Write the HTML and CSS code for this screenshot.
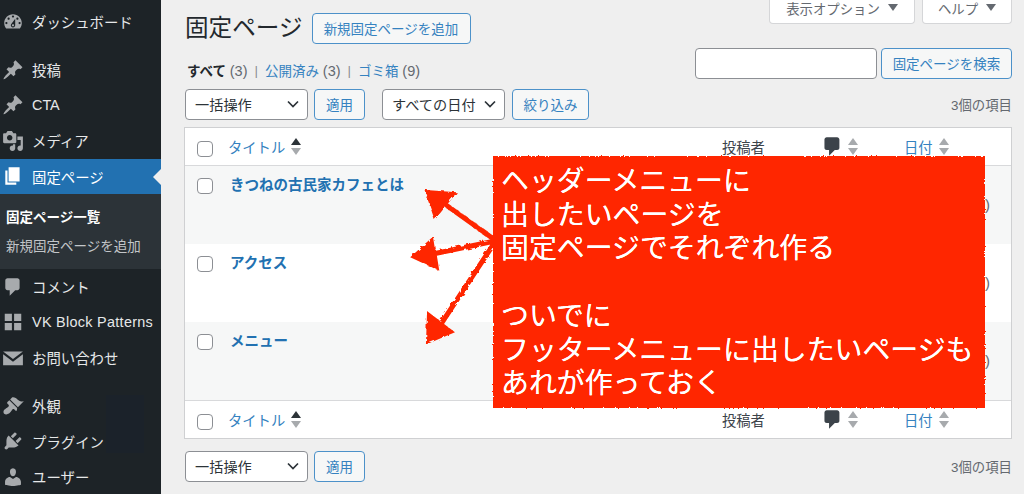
FILE: index.html
```html
<!DOCTYPE html>
<html lang="ja">
<head>
<meta charset="utf-8">
<title>固定ページ</title>
<link rel="stylesheet" href="styles.css">
</head>
<body>
<svg class="defs" width="0" height="0" aria-hidden="true">
  <defs>
    <filter id="rough" x="-5%" y="-5%" width="110%" height="110%">
      <feTurbulence type="fractalNoise" baseFrequency="0.22" numOctaves="2" seed="4" result="n"/>
      <feDisplacementMap in="SourceGraphic" in2="n" scale="4"/>
    </filter>
    <filter id="rough-edge" x="-2%" y="-2%" width="104%" height="104%">
      <feTurbulence type="fractalNoise" baseFrequency="0.6" numOctaves="2" seed="7" result="n"/>
      <feDisplacementMap in="SourceGraphic" in2="n" scale="2.500"/>
    </filter>
    <symbol id="i-pin" viewBox="0 0 20 20"><path d="M10.44 3.02l1.82-1.82 6.36 6.35-1.83 1.82c-1.05-.68-2.48-.57-3.41.36l-.75.75c-.92.93-1.04 2.35-.35 3.41l-1.83 1.82-2.41-2.41-2.8 2.79c-.42.42-3.38 2.71-3.8 2.29s1.86-3.39 2.28-3.81l2.79-2.79L4.1 9.36l1.83-1.82c1.05.69 2.48.57 3.4-.36l.75-.75c.93-.92 1.05-2.35.36-3.41z"/></symbol>
    <symbol id="i-comment" viewBox="0 0 20 20"><path d="M5 2h9c1.1 0 2 .9 2 2v7c0 1.1-.9 2-2 2h-2l-5 5v-5H5c-1.1 0-2-.9-2-2V4c0-1.1.9-2 2-2z"/></symbol>
    <symbol id="i-sort" viewBox="0 0 10 17"><path class="up" d="M5 0l5 7H0z"/><path class="down" d="M0 10h10l-5 7z"/></symbol>
    <symbol id="i-chev" viewBox="0 0 12 8"><path d="M1 1.500l5 5 5-5" fill="none" stroke="currentColor" stroke-width="1.700"/></symbol>
  </defs>
</svg>
<div class="app">
  <nav class="sidebar">
    <a class="item"><svg class="ico" viewBox="0 0 20 20"><path d="M3.76 16h12.48c1.1-1.37 1.76-3.11 1.76-5 0-4.42-3.58-8-8-8s-8 3.58-8 8c0 1.89.66 3.63 1.76 5zM10 4c.55 0 1 .45 1 1s-.45 1-1 1-1-.45-1-1 .45-1 1-1zM6 6c.55 0 1 .45 1 1s-.45 1-1 1-1-.45-1-1 .45-1 1-1zm8 0c.55 0 1 .45 1 1s-.45 1-1 1-1-.45-1-1 .45-1 1-1zm-5.37 5.55L12 7v6c0 1.1-.9 2-2 2s-2-.9-2-2c0-.57.24-1.08.63-1.45zM4 10c.55 0 1 .45 1 1s-.45 1-1 1-1-.45-1-1 .45-1 1-1zm12 0c.55 0 1 .45 1 1s-.45 1-1 1-1-.45-1-1 .45-1 1-1zm-5 3c0-.55-.45-1-1-1s-1 .45-1 1 .45 1 1 1 1-.45 1-1z" fill-rule="evenodd"/></svg>ダッシュボード</a>
    <div class="group">
      <a class="item"><svg class="ico"><use href="#i-pin"/></svg>投稿</a>
      <a class="item"><svg class="ico"><use href="#i-pin"/></svg>CTA</a>
      <a class="item"><svg class="ico" viewBox="0 0 20 20"><path d="M13 11V4c0-.55-.45-1-1-1h-1.67L9 1H5L3.67 3H2c-.55 0-1 .45-1 1v7c0 .55.45 1 1 1h10c.55 0 1-.45 1-1zM7 4.5c1.38 0 2.5 1.12 2.5 2.5S8.38 9.5 7 9.5 4.5 8.38 4.5 7 5.62 4.5 7 4.5zM14 6h5v10.5c0 1.38-1.12 2.5-2.5 2.5S14 17.88 14 16.5s1.12-2.5 2.5-2.5c.17 0 .34.02.5.05V9h-3V6zm-4 8.05V13h2v3.5c0 1.38-1.12 2.5-2.5 2.5S7 17.88 7 16.5 8.12 14 9.5 14c.17 0 .34.02.5.05z"/></svg>メディア</a>
      <a class="item current"><svg class="ico" viewBox="0 0 20 20"><path d="M6 15V2h10v13H6zm-1 1h8v2H3V5h2v11z"/></svg>固定ページ</a>
      <div class="submenu">
        <a class="sub strong">固定ページ一覧</a>
        <a class="sub">新規固定ページを追加</a>
      </div>
      <a class="item"><svg class="ico"><use href="#i-comment"/></svg>コメント</a>
      <a class="item wide"><svg class="ico" viewBox="0 0 20 20"><path d="M2.500 2.500h6.500v6.500H2.500zM11 2.500h6.500v6.500H11zM2.500 11h6.500v6.500H2.500zM11 11h6.500v6.500H11z"/></svg>VK Block Patterns</a>
      <a class="item"><svg class="ico" viewBox="0 0 20 20"><path d="M1 4h18L10 11zM1 6.500l9 7 9-7V16.500H1z"/></svg>お問い合わせ</a>
    </div>
    <div class="group">
      <a class="item"><svg class="ico" viewBox="0 0 20 20"><path d="M14.48 11.06L7.41 3.99l1.5-1.5c.5-.56 2.3-.47 3.51.32 1.21.8 1.43 1.28 2.91 2.1 1.18.64 2.45 1.26 4.45.85zm-.71.71L6.7 4.7 4.93 6.47c-.39.39-.39 1.02 0 1.41l1.06 1.06c.39.39.39 1.03 0 1.42-.6.6-1.43 1.11-2.21 1.69-.35.26-.7.53-1.01.84C1.43 13.23.78 15.79 2 17s3.77.56 5.11-.77c.31-.31.58-.66.84-1.01.58-.78 1.09-1.61 1.69-2.21.39-.39 1.03-.39 1.42 0l1.06 1.06c.39.39 1.02.39 1.41 0z"/></svg>外観</a>
      <a class="item"><svg class="ico" viewBox="0 0 20 20"><path d="M13.11 4.36L9.87 7.6 8 5.73l3.24-3.24c.35-.34 1.05-.2 1.56.32.52.51.66 1.21.31 1.55zm-8 1.77l.91-1.12 9.01 9.01-1.19.84c-.71.71-2.63 1.16-3.82 1.16H6.14L4.9 17.26c-.59.59-1.54.59-2.12 0-.59-.58-.59-1.53 0-2.12l1.24-1.24v-3.88c0-1.13.4-3.19 1.09-3.89zm7.26 3.97l3.24-3.24c.34-.35 1.04-.21 1.55.31.52.51.66 1.21.31 1.55l-3.24 3.25z"/></svg>プラグイン</a>
      <a class="item"><svg class="ico" viewBox="0 0 20 20"><path d="M10 9.25c-2.27 0-2.73-3.44-2.73-3.44C7 4.02 7.82 2 9.97 2c2.16 0 2.98 2.02 2.71 3.81 0 0-.41 3.44-2.68 3.44zm0 2.57L12.72 10c2.39 0 4.52 2.33 4.52 4.53v2.49s-3.65 1.13-7.24 1.13c-3.65 0-7.24-1.13-7.24-1.13v-2.49c0-2.25 1.94-4.48 4.47-4.48z"/></svg>ユーザー</a>
    </div>
    <span class="smudge"></span>
  </nav>

  <main class="main">
    <div class="top">
      <div class="heading">
        <h1>固定ページ</h1>
        <a class="btn add">新規固定ページを追加</a>
      </div>
      <div class="tabs">
        <a class="tab screen">表示オプション<i class="tri"></i></a>
        <a class="tab help">ヘルプ<i class="tri"></i></a>
      </div>
    </div>

    <div class="filters">
      <ul class="subsub">
        <li><b>すべて</b> <span>(3)</span></li>
        <li class="sep">|</li>
        <li><a>公開済み</a> <span>(3)</span></li>
        <li class="sep">|</li>
        <li><a>ゴミ箱</a> <span>(9)</span></li>
      </ul>
      <div class="search">
        <input class="search-input" type="text" aria-label="固定ページを検索">
        <a class="btn search-btn">固定ページを検索</a>
      </div>
    </div>

    <div class="toolbar">
      <div class="select bulk">一括操作<svg class="chev"><use href="#i-chev"/></svg></div>
      <a class="btn apply">適用</a>
      <div class="select dates">すべての日付<svg class="chev"><use href="#i-chev"/></svg></div>
      <a class="btn narrow">絞り込み</a>
      <span class="count">3個の項目</span>
    </div>

    <section class="table">
      <div class="row head">
        <span class="check"></span>
        <span class="col-title"><a>タイトル</a><svg class="sort active"><use href="#i-sort"/></svg></span>
        <span class="col-author">投稿者</span>
        <span class="col-comments"><svg class="cmt"><use href="#i-comment"/></svg><svg class="sort"><use href="#i-sort"/></svg></span>
        <span class="col-date"><a>日付</a><svg class="sort"><use href="#i-sort"/></svg></span>
      </div>
      <div class="row page odd">
        <span class="check"></span>
        <a class="page-title">きつねの古民家カフェとは</a>
        <span class="date-tail">)</span>
      </div>
      <div class="row page">
        <span class="check"></span>
        <a class="page-title">アクセス</a>
        <span class="date-tail">)</span>
      </div>
      <div class="row page odd">
        <span class="check"></span>
        <a class="page-title">メニュー</a>
        <span class="date-tail">)</span>
      </div>
      <div class="row head foot">
        <span class="check"></span>
        <span class="col-title"><a>タイトル</a><svg class="sort active"><use href="#i-sort"/></svg></span>
        <span class="col-author">投稿者</span>
        <span class="col-comments"><svg class="cmt"><use href="#i-comment"/></svg><svg class="sort"><use href="#i-sort"/></svg></span>
        <span class="col-date"><a>日付</a><svg class="sort"><use href="#i-sort"/></svg></span>
      </div>
    </section>

    <div class="toolbar bottom">
      <div class="select bulk">一括操作<svg class="chev"><use href="#i-chev"/></svg></div>
      <a class="btn apply">適用</a>
      <span class="count">3個の項目</span>
    </div>
  </main>
</div>

<svg class="arrows" viewBox="0 0 90 170" aria-hidden="true">
  <g class="rough-art">
    <path class="shaft" d="M85 65 29 25M85 66 18 80M85 67 29 152"/>
    <path class="head-tri" d="M16 16 45 18 25 43zM2 82 23 63 28 94zM18 138 43 157 17 168z"/>
  </g>
</svg>

<aside class="callout">
  <span class="callout-bg"></span>
  <p>ヘッダーメニューに<br>出したいページを<br>固定ページでそれぞれ作る<br><br>ついでに<br>フッターメニューに出したいページも<br>あれが作っておく</p>
</aside>
</body>
</html>
```

FILE: styles.css
```css
* { box-sizing: border-box; }
html, body { margin: 0; height: 494px; overflow: hidden; }
body {
  position: relative;
  background: #efefef;
  color: #3c434a;
  font-family: "Liberation Sans", "Noto Sans CJK JP", sans-serif;
  font-size: 14px;
}
a { color: #3582c0; text-decoration: none; }
.defs { position: absolute; }

.app { display: flex; height: 494px; }

/* sidebar */
.sidebar {
  position: relative;
  flex: 0 0 161px;
  background: #1d2327;
  padding-top: 4px;
  color: #f0f0f1;
}
.group { margin-top: 12.500px; }
.item {
  position: relative;
  z-index: 1;
  display: flex;
  align-items: center;
  gap: 8px;
  height: 35.500px;
  padding-left: 2px;
  color: #e6e8e9;
  font-size: 14.400px;
  white-space: nowrap;
}
.wide { letter-spacing: .3px; }
.ico { width: 22px; height: 22px; flex: none; fill: #a7aaad; }
.item.current { background: #2271b1; color: #fff; }
.item.current .ico { fill: #fff; }
.item.current::after {
  content: "";
  position: absolute;
  right: 0;
  top: 10px;
  border: 8px solid transparent;
  border-right-color: #efefef;
  border-left-width: 0;
}
.submenu { background: #2c3338; height: 75px; padding-top: 14px; }
.sub { display: block; padding-left: 6px; height: 29px; line-height: 20px; font-size: 13.500px; color: #c3c6c9; white-space: nowrap; }
.sub.strong { color: #fff; font-weight: 700; }
.smudge { position: absolute; left: 106px; top: 395px; width: 38px; height: 58px; background: #1b222a; }

/* main */
.main { flex: 1; min-width: 0; padding: 0 12px 0 24px; }
.top { display: flex; justify-content: space-between; height: 44px; }
.heading { display: flex; align-items: flex-start; gap: 9px; padding-top: 13px; }
h1 { margin: 0; font-size: 23.600px; font-weight: 400; line-height: 30px; color: #23282d; white-space: nowrap; }
.btn {
  display: inline-flex;
  align-items: center;
  justify-content: center;
  height: 31px;
  padding-bottom: 1px;
  border: 1px solid #4c91c9;
  border-radius: 4px;
  background: #f6f7f7;
  color: #3582c0;
  font-size: 13.500px;
  white-space: nowrap;
}
.add { width: 159px; }
.tabs { display: flex; gap: 7px; }
.tab {
  display: flex;
  align-items: center;
  justify-content: center;
  gap: 8px;
  height: 24px;
  padding-bottom: 8px;
  background: #fff;
  border: 1px solid #d5d6d8;
  border-top: 0;
  border-radius: 0 0 4px 4px;
  color: #646970;
  font-size: 13.400px;
  white-space: nowrap;
}
.screen { width: 146px; }
.help { width: 90px; }
.tri { border: 5px solid transparent; border-top: 7px solid #646970; border-bottom: 0; }

.filters { display: flex; justify-content: space-between; height: 35px; margin-top: 4px; }
.subsub { display: flex; gap: 7px; list-style: none; margin: 0; padding: 13px 0 0 2px; font-size: 13.500px; line-height: 20px; white-space: nowrap; color: #646970; }
.subsub span { font-size: 14.500px; }
.subsub b { color: #23282d; }
.sep { color: #8c8f94; }
.search { display: flex; gap: 4px; height: 31px; }
.search-input { width: 182px; height: 31px; border: 1px solid #8c8f94; border-radius: 4px; background: #fff; padding: 0; }
.search-btn { width: 131px; }

.toolbar { display: flex; align-items: center; height: 31px; margin-top: 6px; }
.select {
  display: flex;
  align-items: center;
  justify-content: space-between;
  height: 31px;
  width: 123px;
  padding: 0 8px 1px 9px;
  background: #fff;
  border: 1px solid #8c8f94;
  border-radius: 4px;
  color: #2c3338;
  font-size: 14.200px;
  white-space: nowrap;
}
.chev { width: 12px; height: 8px; color: #2c3338; }
.apply { width: 51px; margin-left: 6px; }
.dates { margin-left: 17px; }
.narrow { width: 77px; margin-left: 7px; }
.count { margin-left: auto; padding-bottom: 2px; color: #646970; font-size: 13.400px; }

/* table */
.table { margin: 7px 0 0 -1px; background: #fff; border: 1px solid #cfd0d2; height: 312px; }
.row { display: grid; grid-template-columns: 43px 494px 102px 80px 1fr; }
.head { height: 38px; padding-bottom: 1px; border-bottom: 1px solid #d8d9db; align-items: center; font-size: 14.300px; color: #3c434a; }
.foot { border-bottom: 0; border-top: 1px solid #d8d9db; }
.check { display: block; width: 16px; height: 16px; margin-left: 12px; background: #fff; border: 1px solid #8c8f94; border-radius: 4px; }
.head .check { margin-top: 5px; }
.col-title, .col-comments, .col-date { display: flex; align-items: center; gap: 6px; }
.col-title a, .col-date a { color: #3582c0; }
.sort { width: 10px; height: 17px; --up: #a7aaad; fill: #a7aaad; }
.sort.active { --up: #2c3338; }
.cmt { width: 23px; height: 23px; margin: 1px -2px 0 -3px; fill: #3c434a; }

.page { height: 78px; background: #fff; grid-template-columns: 45px 1fr 26px; align-items: start; padding-top: 12px; }
.odd { background: #f6f7f7; }
.page-title { justify-self: start; color: #2271b1; font-weight: 700; font-size: 14.500px; line-height: 14px; }
.date-tail { padding-top: 18px; line-height: 18px; color: #646970; font-size: 15px; }

.bottom { margin-top: 12px; }

/* annotation */
.callout {
  position: absolute;
  left: 493px;
  top: 156px;
  width: 492px;
  height: 252px;
  color: #fff;
}
.callout-bg { position: absolute; inset: 0; background: #ff2600; filter: url(#rough-edge); }
.callout p {
  position: relative;
  width: fit-content;
  margin: 0;
  padding: 7px 0 0 8px;
  font-size: 27.900px;
  line-height: 33.700px;
  font-weight: 400;
  text-shadow: 0 0 .6px #fff;
  white-space: nowrap;
  font-family: "Noto Sans CJK JP", sans-serif;
}
.arrows { position: absolute; left: 410px; top: 175px; width: 90px; height: 170px; overflow: visible; }
.rough-art { filter: url(#rough); }
.shaft { fill: none; stroke: #ff2600; stroke-width: 5px; }
.head-tri { fill: #ff2600; stroke: #ff2600; stroke-width: 2px; }
.up { fill: var(--up); }
```
